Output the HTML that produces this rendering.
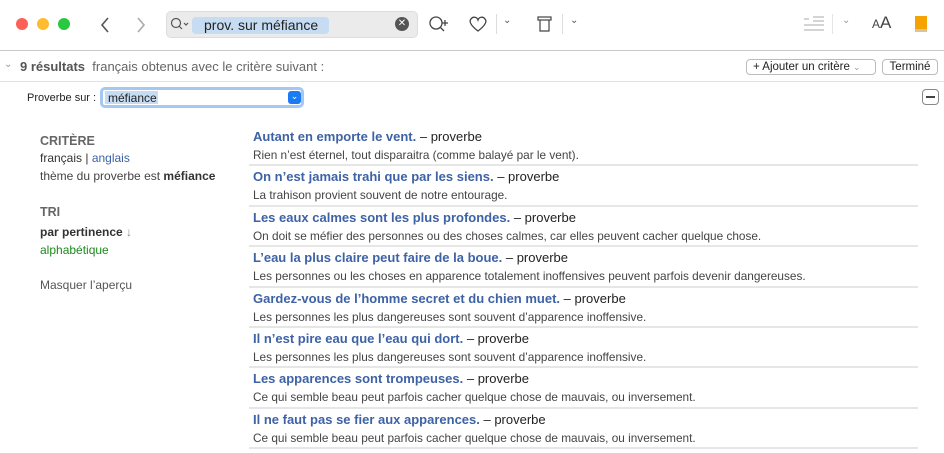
<!DOCTYPE html><html><head><meta charset="utf-8"><style>
*{margin:0;padding:0;box-sizing:border-box}
body{width:944px;height:453px;background:#fff;font-family:"Liberation Sans",sans-serif;position:relative;overflow:hidden;color:#222}
.a{position:absolute;white-space:nowrap}
.dot{position:absolute;width:12px;height:12px;border-radius:50%;top:18px}
.row{position:absolute;left:249px;width:669px;height:40.4px;border-bottom:2px solid #e6e6e6}
.t{position:absolute;left:4px;top:3px;font-size:13px;color:#222}
.t b{color:#3d62a6}
.d{position:absolute;left:4px;top:22px;font-size:11.8px;color:#444}
</style></head><body>
<div class="dot" style="left:16px;background:#fe5f57"></div>
<div class="dot" style="left:37px;background:#febc2e"></div>
<div class="dot" style="left:58px;background:#28c840"></div>
<svg class="a" style="left:98px;top:15px" width="60" height="20"><path d="M10 3 L4 10 L10 17" fill="none" stroke="#555" stroke-width="1.6"/><path d="M40 3 L46 10 L40 17" fill="none" stroke="#aaa" stroke-width="1.6"/></svg>
<div class="a" style="left:166px;top:11px;width:252px;height:27px;background:#ebebeb;border-radius:5px;border:1px solid #ddd"></div>
<svg class="a" style="left:170px;top:17px" width="20" height="16"><circle cx="6" cy="6" r="4.5" fill="none" stroke="#555" stroke-width="1.2"/><path d="M9 9 L12 12 M14 6 L16 8 L18 6" stroke="#555" fill="none" stroke-width="1.2"/></svg>
<div class="a" style="left:192px;top:17px;width:137px;height:17px;background:#c5dcf3;border-radius:4px"></div>
<div class="a" style="left:204px;top:17px;font-size:14px;color:#222">prov. sur méfiance</div>
<div class="a" style="left:395px;top:17px;width:14px;height:14px;border-radius:50%;background:#555;color:#fff;font-size:10px;text-align:center;line-height:14px">✕</div>
<svg class="a" style="left:428px;top:14px" width="22" height="22"><circle cx="8" cy="9" r="6" fill="none" stroke="#444" stroke-width="1.3"/><path d="M12 13 L16 17 M14 9 H20 M17 6 V12" stroke="#444" stroke-width="1.3"/></svg>
<svg class="a" style="left:468px;top:15px" width="20" height="18"><path d="M10 16 C2 10 1 6 3 4 C5 1 9 2 10 5 C11 2 15 1 17 4 C19 6 18 10 10 16Z" fill="none" stroke="#444" stroke-width="1.3"/></svg>
<div class="a" style="left:496px;top:14px;width:1px;height:20px;background:#ddd"></div>
<div class="a" style="left:503px;top:15px;font-size:10px;color:#555">⌄</div>
<svg class="a" style="left:536px;top:14px" width="18" height="20"><rect x="2" y="3" width="13" height="3" fill="none" stroke="#444" stroke-width="1.2"/><path d="M4 6 V17 H13 V6" fill="none" stroke="#444" stroke-width="1.2"/></svg>
<div class="a" style="left:562px;top:14px;width:1px;height:20px;background:#ddd"></div>
<div class="a" style="left:570px;top:15px;font-size:10px;color:#555">⌄</div>
<svg class="a" style="left:803px;top:15px" width="22" height="18"><path d="M1 4 H6 M10 2 H21 M10 6 H21 M1 10 H21 M1 15 H21" stroke="#bbb" stroke-width="1.3"/></svg>
<div class="a" style="left:832px;top:14px;width:1px;height:20px;background:#e5e5e5"></div>
<div class="a" style="left:842px;top:15px;font-size:10px;color:#999">⌄</div>
<div class="a" style="left:872px;top:13px;color:#444"><span style="font-size:12px">A</span><span style="font-size:17px">A</span></div>
<div class="a" style="left:915px;top:16px;width:12px;height:16px;background:#f5a300;border-bottom:3px solid #d8c49a"></div>
<div class="a" style="left:0;top:50px;width:944px;height:1px;background:#c8c8c8"></div>
<div class="a" style="left:4px;top:59px;font-size:10px;color:#999">⌄</div>
<div class="a" style="left:20px;top:59px;font-size:13px;color:#666"><b style="color:#555">9 résultats</b>&nbsp; français obtenus avec le critère suivant :</div>
<div class="a" style="left:746px;top:59px;width:130px;height:16px;border:1px solid #bbb;border-radius:4px;font-size:11.5px;color:#222;padding-left:6px;line-height:14px">+ Ajouter un critère <span style="color:#999;font-size:9px">⌄</span></div>
<div class="a" style="left:882px;top:59px;width:56px;height:16px;border:1px solid #bbb;border-radius:4px;font-size:11.5px;color:#222;text-align:center;line-height:14px">Terminé</div>
<div class="a" style="left:0;top:81px;width:944px;height:1px;background:#e0e0e0"></div>
<div class="a" style="left:27px;top:92px;font-size:11px;color:#222">Proverbe sur :</div>
<div class="a" style="left:100px;top:87px;width:204px;height:21px;border:3px solid #a5c8f3;border-radius:5px;background:#fff"></div>
<div class="a" style="left:105px;top:91px;width:53px;height:13px;background:#c5dcf3"></div>
<div class="a" style="left:108px;top:91px;font-size:12px;color:#222">méfiance</div>
<div class="a" style="left:288px;top:91px;width:13px;height:13px;background:#1a7cf5;border-radius:3px;color:#fff;font-size:9px;text-align:center;line-height:11px">⌄</div>
<div class="a" style="left:922px;top:89px;width:17px;height:16px;border:1px solid #888;border-radius:4px"><div style="margin:6px 3px;height:1.5px;background:#444"></div></div>
<div class="a" style="left:40px;top:134px;font-size:12.5px;font-weight:bold;color:#666">CRITÈRE</div>
<div class="a" style="left:40px;top:151px;font-size:12px;color:#333">français | <span style="color:#3d62a6">anglais</span></div>
<div class="a" style="left:40px;top:169px;font-size:12px;color:#444">thème du proverbe est <b style="color:#333">méfiance</b></div>
<div class="a" style="left:40px;top:205px;font-size:12.5px;font-weight:bold;color:#666">TRI</div>
<div class="a" style="left:40px;top:225px;font-size:12px;font-weight:bold;color:#333">par pertinence <span style="font-weight:normal;color:#888">↓</span></div>
<div class="a" style="left:40px;top:243px;font-size:12px;color:#1a8a1a">alphabétique</div>
<div class="a" style="left:40px;top:278px;font-size:12px;color:#555">Masquer l’aperçu</div>
<div class="row" style="top:126px"><div class="t"><b>Autant en emporte le vent.</b> – proverbe</div><div class="d">Rien n’est éternel, tout disparaitra (comme balayé par le vent).</div></div>
<div class="row" style="top:166.4px"><div class="t"><b>On n’est jamais trahi que par les siens.</b> – proverbe</div><div class="d">La trahison provient souvent de notre entourage.</div></div>
<div class="row" style="top:206.8px"><div class="t"><b>Les eaux calmes sont les plus profondes.</b> – proverbe</div><div class="d">On doit se méfier des personnes ou des choses calmes, car elles peuvent cacher quelque chose.</div></div>
<div class="row" style="top:247.2px"><div class="t"><b>L’eau la plus claire peut faire de la boue.</b> – proverbe</div><div class="d">Les personnes ou les choses en apparence totalement inoffensives peuvent parfois devenir dangereuses.</div></div>
<div class="row" style="top:287.6px"><div class="t"><b>Gardez-vous de l’homme secret et du chien muet.</b> – proverbe</div><div class="d">Les personnes les plus dangereuses sont souvent d’apparence inoffensive.</div></div>
<div class="row" style="top:328px"><div class="t"><b>Il n’est pire eau que l’eau qui dort.</b> – proverbe</div><div class="d">Les personnes les plus dangereuses sont souvent d’apparence inoffensive.</div></div>
<div class="row" style="top:368.4px"><div class="t"><b>Les apparences sont trompeuses.</b> – proverbe</div><div class="d">Ce qui semble beau peut parfois cacher quelque chose de mauvais, ou inversement.</div></div>
<div class="row" style="top:408.8px"><div class="t"><b>Il ne faut pas se fier aux apparences.</b> – proverbe</div><div class="d">Ce qui semble beau peut parfois cacher quelque chose de mauvais, ou inversement.</div></div>
</body></html>
